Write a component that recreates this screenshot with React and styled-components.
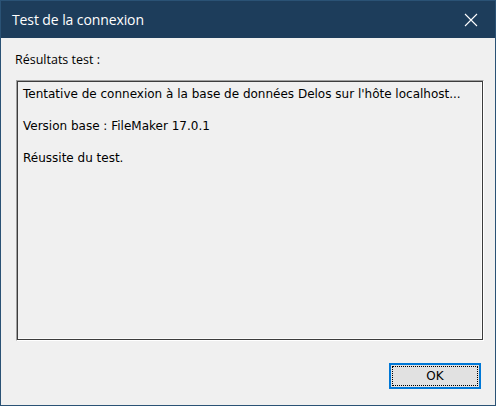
import React from 'react';
import styled, { createGlobalStyle } from 'styled-components';

const GlobalStyle = createGlobalStyle`
  html, body {
    margin: 0;
    padding: 0;
    background: #f0f0f0;
  }
  * { box-sizing: border-box; }
`;

const Window = styled.div`
  width: 496px;
  height: 406px;
  border: 1px solid #2a5275;
  background: #f0f0f0;
  display: flex;
  flex-direction: column;
  font-family: "DejaVu Sans", Verdana, sans-serif;
  color: #000;
`;

const TitleBar = styled.div`
  height: 37px;
  background: #1d3d5b;
  display: flex;
  align-items: center;
  justify-content: space-between;
  padding: 0 0 0 11px;
  flex-shrink: 0;
`;

const Title = styled.span`
  color: #fff;
  font-family: "Open Sans", "Noto Sans", sans-serif;
  font-size: 14px;
  letter-spacing: -0.1px;
  margin-top: -1px;
`;

const CloseButton = styled.div`
  width: 46px;
  height: 37px;
  display: flex;
  align-items: center;
  justify-content: center;
  margin-right: 1px;
`;

const Body = styled.div`
  flex: 1;
  display: flex;
  flex-direction: column;
  padding: 14px 11px 16px 14px;
`;

const Label = styled.div`
  font-family: "Open Sans", "Noto Sans", sans-serif;
  font-size: 12.5px;
  height: 16px;
  line-height: 16px;
  margin: 0 0 12px 0;
`;

const ResultBox = styled.div`
  height: 261px;
  margin-left: 1px;
  border-top: 1px solid #a0a0a0;
  border-left: 1px solid #a0a0a0;
  border-right: 1px solid #ffffff;
  border-bottom: 1px solid #ffffff;
  box-shadow: inset 1px 1px 0 #3c3c3c, inset -1px -1px 0 #3c3c3c, inset -2px -2px 0 #fbfbfb;
  padding: 3px 6px;
  display: flex;
  flex-direction: column;
  gap: 12px;
`;

const Line = styled.div`
  font-size: 12px;
  letter-spacing: 0;
  line-height: 20px;
  white-space: nowrap;
`;

const Footer = styled.div`
  display: flex;
  justify-content: flex-end;
  margin-top: 22px;
`;

const OkButton = styled.button`
  width: 92px;
  height: 26px;
  margin-right: 3px;
  border: 2px solid #0078d7;
  background: #e1e1e1;
  padding: 1px;
  font-family: "DejaVu Sans", Verdana, sans-serif;
  font-size: 12px;
  color: #000;
  display: flex;
  cursor: default;
`;

const FocusRect = styled.span`
  flex: 1;
  border: 1px dotted #000;
  display: flex;
  align-items: center;
  justify-content: center;
`;

export default function App() {
  return (
    <>
      <GlobalStyle />
      <Window>
        <TitleBar>
          <Title>Test de la connexion</Title>
          <CloseButton>
            <svg width="14" height="14" viewBox="0 0 14 14">
              <path d="M1 1 L13 13 M13 1 L1 13" stroke="#fff" strokeWidth="1.1" fill="none" />
            </svg>
          </CloseButton>
        </TitleBar>
        <Body>
          <Label>Résultats test :</Label>
          <ResultBox>
            <Line>Tentative de connexion à la base de données Delos sur l'hôte localhost...</Line>
            <Line>Version base : FileMaker 17.0.1</Line>
            <Line>Réussite du test.</Line>
          </ResultBox>
          <Footer>
            <OkButton>
              <FocusRect>OK</FocusRect>
            </OkButton>
          </Footer>
        </Body>
      </Window>
    </>
  );
}
